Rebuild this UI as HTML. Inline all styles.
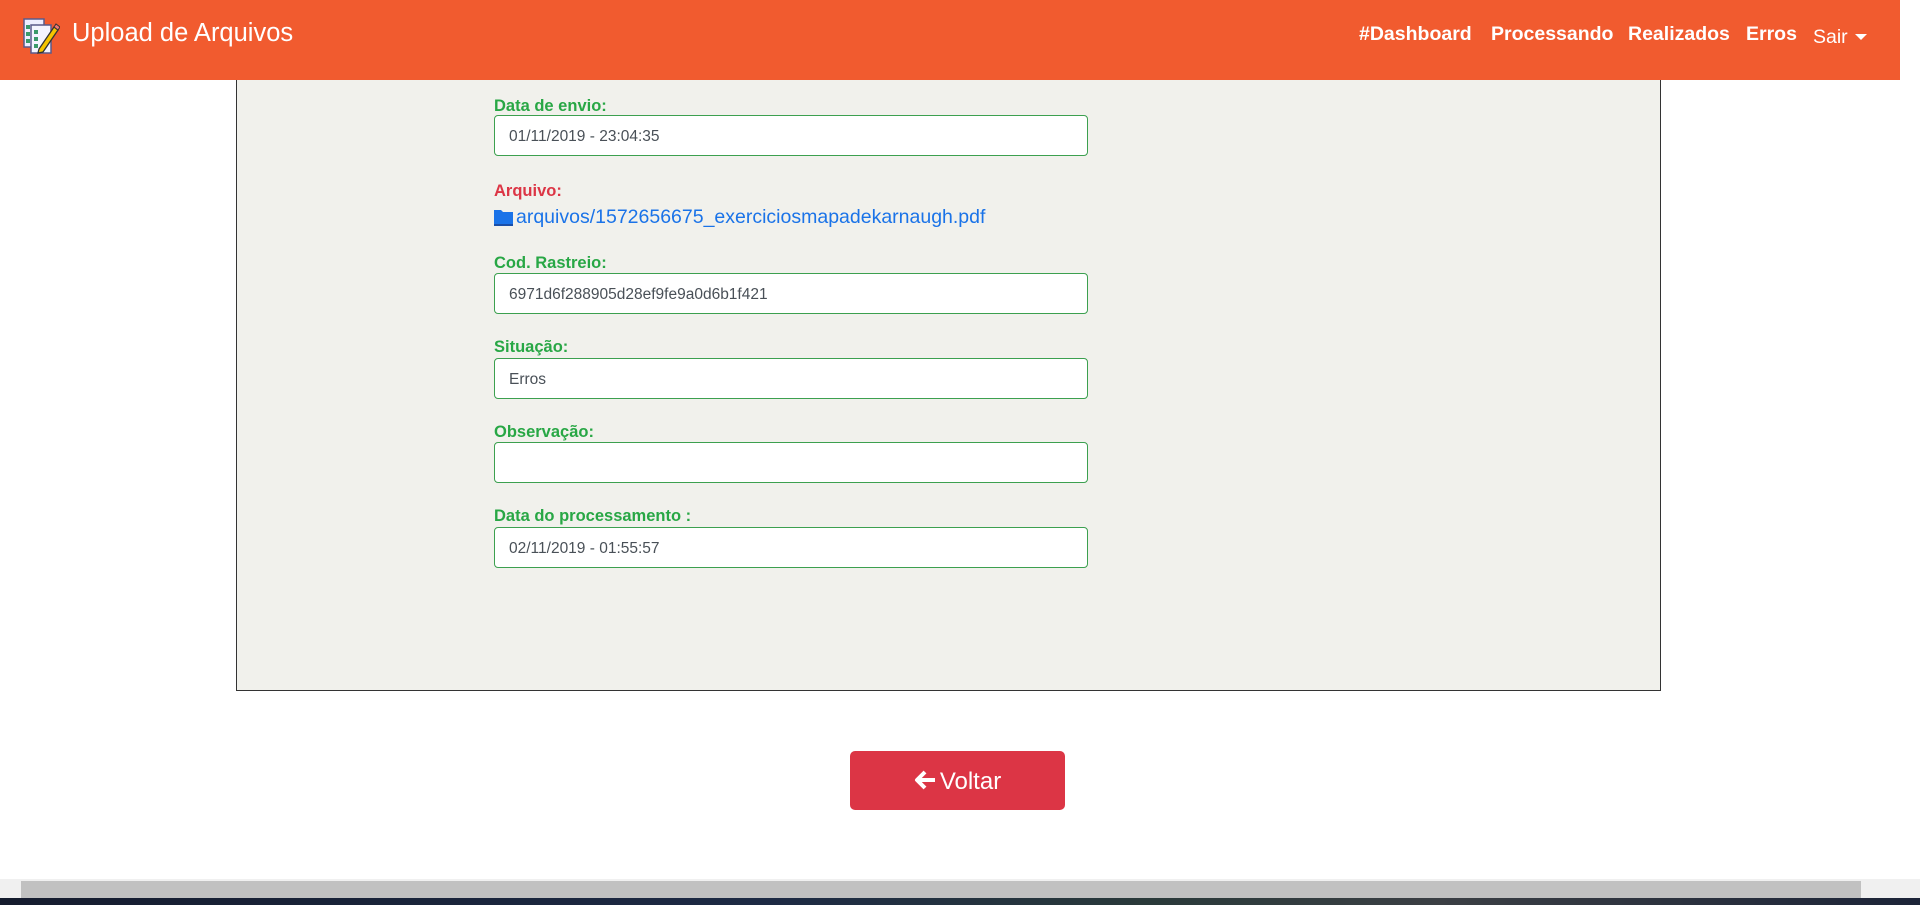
<!DOCTYPE html>
<html><head><meta charset="utf-8"><style>
*{box-sizing:border-box;margin:0;padding:0}
html,body{width:1920px;height:905px;overflow:hidden;background:#fff;font-family:"Liberation Sans",sans-serif;position:relative}
.hdr{position:absolute;left:0;top:0;width:1900px;height:80px;background:#f15b2f;color:#fff;z-index:2}
.title{position:absolute;left:72px;top:19px;font-size:25.5px}
.nav{position:absolute;top:23px;font-size:19.5px;font-weight:bold}
.box{position:absolute;left:236px;top:40px;width:1425px;height:651px;background:#f1f1ec;border:1px solid #333}
.lbl{position:absolute;left:494px;font-size:16.5px;font-weight:bold;color:#28a745}
.inp{position:absolute;left:494px;width:594px;height:41px;background:#fff;border:1px solid #3ca04f;border-radius:4px;font-size:15.5px;color:#495057;padding:12px 0 0 14px}
.link{position:absolute;left:494px;top:206px;font-size:19.5px;color:#1a73e8}
.btn{position:absolute;left:850px;top:751px;width:215px;height:59px;background:#dc3545;border-radius:5px;color:#fff;font-size:24px;text-align:center;line-height:62px}
.sb{position:absolute;left:0;top:879px;width:1920px;height:19px;background:#f0f0f0}
.th{position:absolute;left:21px;top:881px;width:1840px;height:17px;background:#c1c1c1}
.tb{position:absolute;left:0;top:898px;width:1920px;height:7px;background:linear-gradient(90deg,#151c2e,#1d2a44 40%,#2a3a3a 60%,#3b3f44 75%,#1c2438)}
</style></head><body>
<div class="hdr">
<svg style="position:absolute;left:22px;top:17px" width="38" height="40" viewBox="0 0 38 40">
<rect x="2" y="2" width="20" height="28" fill="#eef" stroke="#5a5a8a" stroke-width="1.5"/>
<rect x="9" y="8" width="20" height="28" fill="#f4f4ff" stroke="#5a5a8a" stroke-width="1.5"/>
<rect x="4" y="8" width="4" height="4" fill="#3a9a6a"/><rect x="4" y="15" width="4" height="4" fill="#3a9a6a"/><rect x="4" y="22" width="4" height="4" fill="#3a9a6a"/>
<rect x="12" y="13" width="4" height="4" fill="#3a9a6a"/><rect x="12" y="20" width="4" height="4" fill="#3a9a6a"/><rect x="12" y="27" width="4" height="4" fill="#3a9a6a"/>
<path d="M17 32 L32 10 L36 13 L21 35 L16 36 Z" fill="#f5c400" stroke="#333" stroke-width="1.3"/>
<path d="M32 10 L34 7 L38 10 L36 13Z" fill="#e77" stroke="#333" stroke-width="1"/>
</svg>
<div class="title">Upload de Arquivos</div>
<div class="nav" style="left:1359px">#Dashboard</div>
<div class="nav" style="left:1491px">Processando</div>
<div class="nav" style="left:1628px">Realizados</div>
<div class="nav" style="left:1746px">Erros</div>
<div class="nav" style="left:1813px;font-weight:normal;top:26px">Sair</div>
<div style="position:absolute;left:1855px;top:34px;border-left:6px solid transparent;border-right:6px solid transparent;border-top:6px solid #fff"></div>
</div>
<div class="box"></div>
<div class="lbl" style="top:97px">Data de envio:</div>
<div class="inp" style="top:115px">01/11/2019 - 23:04:35</div>
<div class="lbl" style="top:182px;color:#dc3545">Arquivo:</div>
<div class="link"><svg width="19" height="19" viewBox="0 0 19 19" style="vertical-align:-3px;margin-right:3px"><path d="M0 3h7l2 2h10v12H0z" fill="#1a73e8"/><rect x="0" y="17" width="19" height="2" fill="#1a4fa8"/></svg>arquivos/1572656675_exerciciosmapadekarnaugh.pdf</div>
<div class="lbl" style="top:254px">Cod. Rastreio:</div>
<div class="inp" style="top:273px">6971d6f288905d28ef9fe9a0d6b1f421</div>
<div class="lbl" style="top:338px">Situação:</div>
<div class="inp" style="top:358px">Erros</div>
<div class="lbl" style="top:423px">Observação:</div>
<div class="inp" style="top:442px"></div>
<div class="lbl" style="top:507px">Data do processamento :</div>
<div class="inp" style="top:527px">02/11/2019 - 01:55:57</div>
<div class="btn"><svg width="22" height="20" viewBox="0 0 22 20" style="vertical-align:-1px;margin-right:4px"><path d="M11 2 L3 10 L11 18 M3 10 H21" stroke="#fff" stroke-width="4" fill="none" stroke-linejoin="round"/></svg>Voltar</div>
<div class="sb"></div><div class="th"></div><div class="tb"></div>
</body></html>
